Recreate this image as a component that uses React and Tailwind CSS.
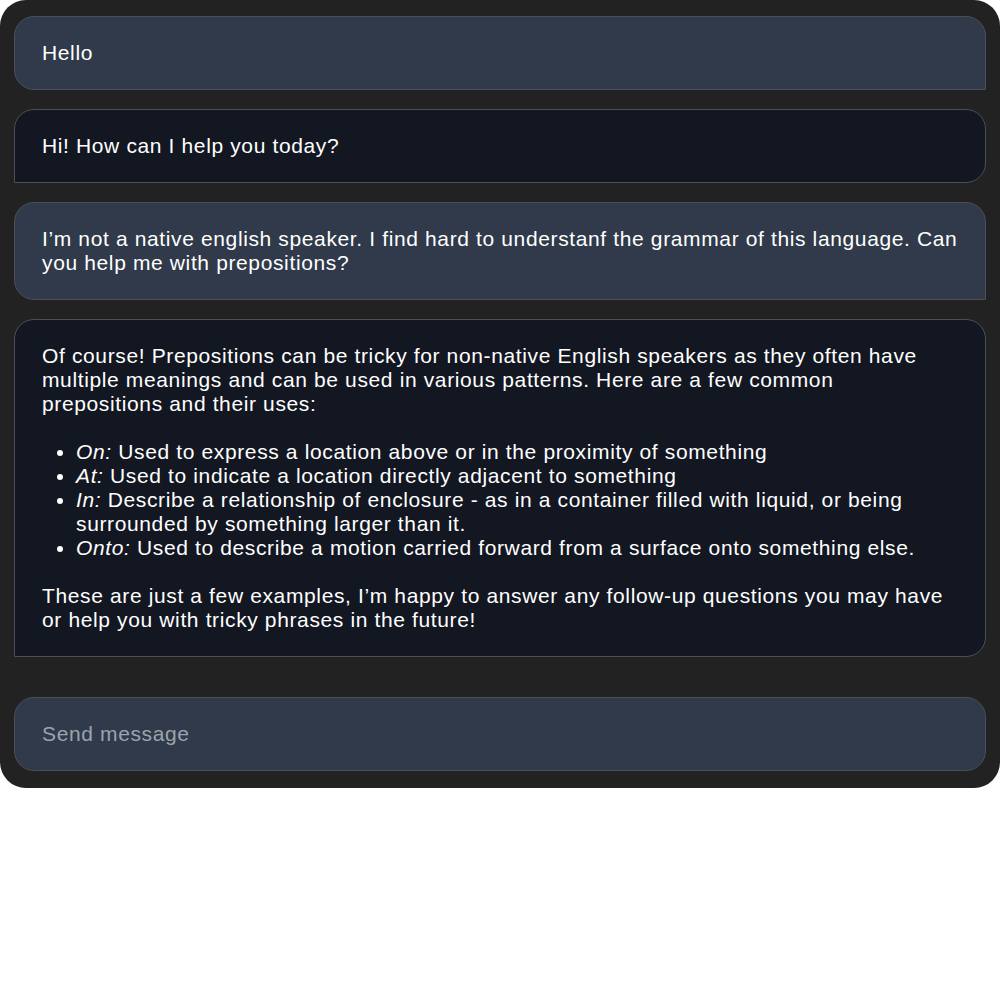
import React from 'react';

const messages = [
  { role: 'user', text: 'Hello' },
  { role: 'assistant', text: 'Hi! How can I help you today?' },
  {
    role: 'user',
    text: 'I’m not a native english speaker. I find hard to understanf the grammar of this language. Can you help me with prepositions?',
  },
];

const items = [
  ['On:', 'Used to express a location above or in the proximity of something'],
  ['At:', 'Used to indicate a location directly adjacent to something'],
  ['In:', 'Describe a relationship of enclosure - as in a container filled with liquid, or being surrounded by something larger than it.'],
  ['Onto:', 'Used to describe a motion carried forward from a surface onto something else.'],
];

const Bubble = ({ role, children }) => (
  <div
    className={
      role === 'user'
        ? 'rounded-[20px] rounded-br-none border border-[#4a4f58] bg-[#303a4a] px-[27px] py-6 text-white'
        : 'rounded-[20px] rounded-bl-none border border-[#4a4f58] bg-[#131722] px-[27px] py-6 text-white'
    }
  >
    {children}
  </div>
);

export default function App() {
  return (
    <div className="w-[1000px] bg-white font-['Liberation_Sans',Arial,sans-serif] text-[21px] leading-6 tracking-[0.63px]">
      <div className="flex flex-col rounded-[26px] bg-[#222222] px-[14px] pt-4 pb-[17px]">
        <div className="flex flex-col gap-[19px]">
          {messages.map((m, i) => (
            <Bubble key={i} role={m.role}>
              {m.text}
            </Bubble>
          ))}
          <Bubble role="assistant">
            <p>
              Of course! Prepositions can be tricky for non-native English speakers as they often have multiple meanings
              and can be used in various patterns. Here are a few common prepositions and their uses:
            </p>
            <ul className="my-6 list-disc pl-[34px]">
              {items.map(([k, v]) => (
                <li key={k}>
                  <em>{k}</em> {v}
                </li>
              ))}
            </ul>
            <p>
              These are just a few examples, I’m happy to answer any follow-up questions you may have or help you with
              tricky phrases in the future!
            </p>
          </Bubble>
        </div>
        <div className="mt-[40px] rounded-[20px] border border-[#4a4f58] bg-[#303a4a] px-[27px] py-6 text-[#9ca3af]">
          Send message
        </div>
      </div>
    </div>
  );
}
